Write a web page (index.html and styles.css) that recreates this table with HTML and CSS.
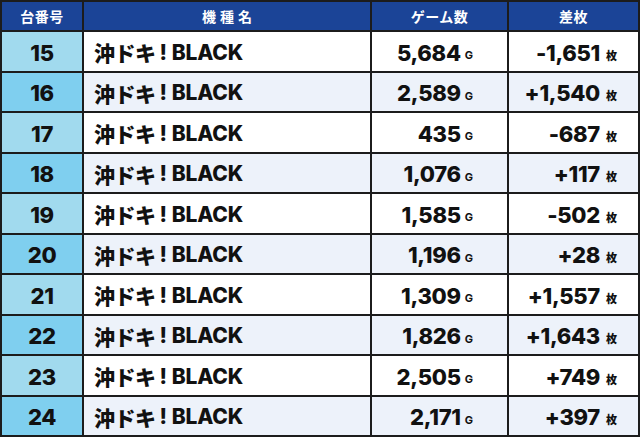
FILE: index.html
```html
<!DOCTYPE html>
<html lang="ja">
<head>
<meta charset="utf-8">
<link rel="stylesheet" href="styles.css">
</head>
<body>
<div class="table">
  <div class="row head">
    <div class="cell">台番号</div>
    <div class="cell spaced">機種名</div>
    <div class="cell">ゲーム数</div>
    <div class="cell">差枚</div>
  </div>
  <div class="row odd"><div class="cell num">15</div><div class="cell name"><span class="jp">沖ドキ</span><span class="ex">!</span>BLACK</div><div class="cell val">5,684<span class="unit g">G</span></div><div class="cell val diff">-1,651<span class="unit">枚</span></div></div>
  <div class="row even"><div class="cell num">16</div><div class="cell name"><span class="jp">沖ドキ</span><span class="ex">!</span>BLACK</div><div class="cell val">2,589<span class="unit g">G</span></div><div class="cell val diff">+1,540<span class="unit">枚</span></div></div>
  <div class="row odd"><div class="cell num">17</div><div class="cell name"><span class="jp">沖ドキ</span><span class="ex">!</span>BLACK</div><div class="cell val">435<span class="unit g">G</span></div><div class="cell val diff">-687<span class="unit">枚</span></div></div>
  <div class="row even"><div class="cell num">18</div><div class="cell name"><span class="jp">沖ドキ</span><span class="ex">!</span>BLACK</div><div class="cell val">1,076<span class="unit g">G</span></div><div class="cell val diff">+117<span class="unit">枚</span></div></div>
  <div class="row odd"><div class="cell num">19</div><div class="cell name"><span class="jp">沖ドキ</span><span class="ex">!</span>BLACK</div><div class="cell val">1,585<span class="unit g">G</span></div><div class="cell val diff">-502<span class="unit">枚</span></div></div>
  <div class="row even"><div class="cell num">20</div><div class="cell name"><span class="jp">沖ドキ</span><span class="ex">!</span>BLACK</div><div class="cell val">1,196<span class="unit g">G</span></div><div class="cell val diff">+28<span class="unit">枚</span></div></div>
  <div class="row odd"><div class="cell num">21</div><div class="cell name"><span class="jp">沖ドキ</span><span class="ex">!</span>BLACK</div><div class="cell val">1,309<span class="unit g">G</span></div><div class="cell val diff">+1,557<span class="unit">枚</span></div></div>
  <div class="row even"><div class="cell num">22</div><div class="cell name"><span class="jp">沖ドキ</span><span class="ex">!</span>BLACK</div><div class="cell val">1,826<span class="unit g">G</span></div><div class="cell val diff">+1,643<span class="unit">枚</span></div></div>
  <div class="row odd"><div class="cell num">23</div><div class="cell name"><span class="jp">沖ドキ</span><span class="ex">!</span>BLACK</div><div class="cell val">2,505<span class="unit g">G</span></div><div class="cell val diff">+749<span class="unit">枚</span></div></div>
  <div class="row even"><div class="cell num">24</div><div class="cell name"><span class="jp">沖ドキ</span><span class="ex">!</span>BLACK</div><div class="cell val">2,171<span class="unit g">G</span></div><div class="cell val diff">+397<span class="unit">枚</span></div></div>
</div>
</body>
</html>
```
FILE: styles.css
```css
html, body {
  margin: 0;
  padding: 0;
  background: #ffffff;
}
.table {
  width: 640px;
  height: 437px;
  box-sizing: border-box;
  border: 2px solid #1c1c1c;
  background: #1c1c1c;
  display: flex;
  flex-direction: column;
  gap: 2px;
  font-family: "Inter", "Noto Sans CJK JP", sans-serif;
  font-weight: 800;
  color: #111111;
}
.row {
  display: grid;
  grid-template-columns: 80px 286px 135px 129px;
  gap: 2px;
  flex: 1 1 0;
  min-height: 0;
}
.row.head {
  flex: 0 0 28px;
}
.cell {
  display: flex;
  align-items: center;
  min-width: 0;
  white-space: nowrap;
}
.head .cell {
  background: #1b4497;
  color: #ffffff;
  justify-content: center;
  font-family: "Noto Sans CJK JP", sans-serif;
  font-size: 14px;
  font-weight: bold;
  letter-spacing: 0.5px;
}
.head .spaced {
  letter-spacing: 4px;
  padding-left: 4px;
}
.odd .cell { background: #ffffff; }
.even .cell { background: #edf2fa; }
.odd .num { background: #a1daee; }
.even .num { background: #7fcfef; }
.num {
  justify-content: center;
  font-size: 22px;
  letter-spacing: -0.3px;
  padding-top: 3px;
}
.name {
  padding-left: 10px;
  padding-top: 2px;
  font-size: 21px;
  letter-spacing: -0.2px;
}
.name .jp {
  font-family: "Noto Sans CJK JP", sans-serif;
  font-weight: 900;
  letter-spacing: -0.5px;
}
.name .ex {
  margin: 0 5px 0 4px;
}
.val {
  justify-content: flex-end;
  font-size: 22px;
  letter-spacing: -0.3px;
  padding-right: 34px;
  padding-top: 3px;
}
.diff {
  padding-right: 21px;
}
.unit {
  font-size: 11px;
  margin-left: 4px;
  padding-top: 5px;
  letter-spacing: 0;
  font-weight: 700;
}
.diff .unit {
  font-family: "Noto Sans CJK JP", sans-serif;
  font-weight: 900;
  margin-left: 6px;
  padding-top: 4px;
}
```
